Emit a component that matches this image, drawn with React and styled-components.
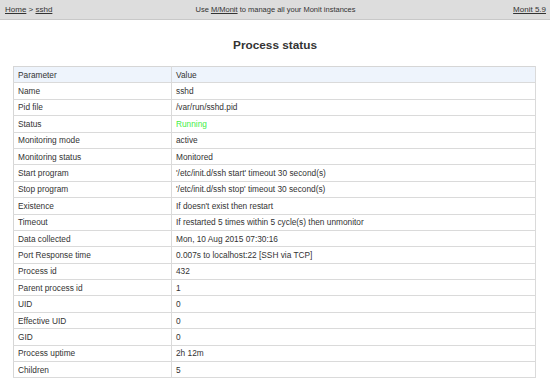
import React from "react";
import styled, { createGlobalStyle } from "styled-components";

const Global = createGlobalStyle`
  html, body { margin: 0; padding: 0; background: #fff; }
  body { font-family: "Liberation Sans", Arial, sans-serif; color: #333; }
`;

const Header = styled.div`
  display: flex;
  align-items: center;
  justify-content: space-between;
  height: 19px;
  padding: 0 4px 0 5px;
  background: #dddddd;
  border-bottom: 1px solid #c8c8c8;
  font-size: 7.5px;
  color: #333;
`;

const Side = styled.div`
  flex: 1;
  display: flex;
  justify-content: ${(p) => p.$align};
  font-size: 8px;
`;

const Link = styled.a`
  color: #333;
  text-decoration: underline;
`;

const Title = styled.h1`
  margin: 17px 0 0;
  text-align: center;
  font-size: 11.8px;
  font-weight: bold;
  color: #333;
  line-height: 16px;
`;

const Table = styled.table`
  width: 523px;
  margin: 13px 0 0 13px;
  border-collapse: collapse;
  font-size: 8.3px;
  border: 1px solid #d6d6d6;
`;

const Row = styled.tr`
  height: 16.4px;
  background: ${(p) => (p.$head ? "#eef4fc" : "#fff")};
  border-bottom: 1px solid #dadada;
`;

const Cell = styled.td`
  padding: 0 4px 0 4px;
  border-right: 1px solid #dadada;
  color: ${(p) => p.$color || "#333"};
  width: ${(p) => p.$w || "auto"};
  white-space: nowrap;
`;

const rows = [
  ["Name", "sshd"],
  ["Pid file", "/var/run/sshd.pid"],
  ["Status", "Running", "#44ee44"],
  ["Monitoring mode", "active"],
  ["Monitoring status", "Monitored"],
  ["Start program", "'/etc/init.d/ssh start' timeout 30 second(s)"],
  ["Stop program", "'/etc/init.d/ssh stop' timeout 30 second(s)"],
  ["Existence", "If doesn't exist then restart"],
  ["Timeout", "If restarted 5 times within 5 cycle(s) then unmonitor"],
  ["Data collected", "Mon, 10 Aug 2015 07:30:16"],
  ["Port Response time", "0.007s to localhost:22 [SSH via TCP]"],
  ["Process id", "432"],
  ["Parent process id", "1"],
  ["UID", "0"],
  ["Effective UID", "0"],
  ["GID", "0"],
  ["Process uptime", "2h 12m"],
  ["Children", "5"],
];

export default function App() {
  return (
    <>
      <Global />
      <Header>
        <Side $align="flex-start">
          <span>
            <Link href="#">Home</Link> &gt; <Link href="#">sshd</Link>
          </span>
        </Side>
        <span>
          Use <Link href="#">M/Monit</Link> to manage all your Monit instances
        </span>
        <Side $align="flex-end">
          <Link href="#">Monit 5.9</Link>
        </Side>
      </Header>
      <Title>Process status</Title>
      <Table>
        <tbody>
          <Row $head>
            <Cell $w="149px">Parameter</Cell>
            <Cell>Value</Cell>
          </Row>
          {rows.map(([k, v, c]) => (
            <Row key={k}>
              <Cell>{k}</Cell>
              <Cell $color={c}>{v}</Cell>
            </Row>
          ))}
        </tbody>
      </Table>
    </>
  );
}
